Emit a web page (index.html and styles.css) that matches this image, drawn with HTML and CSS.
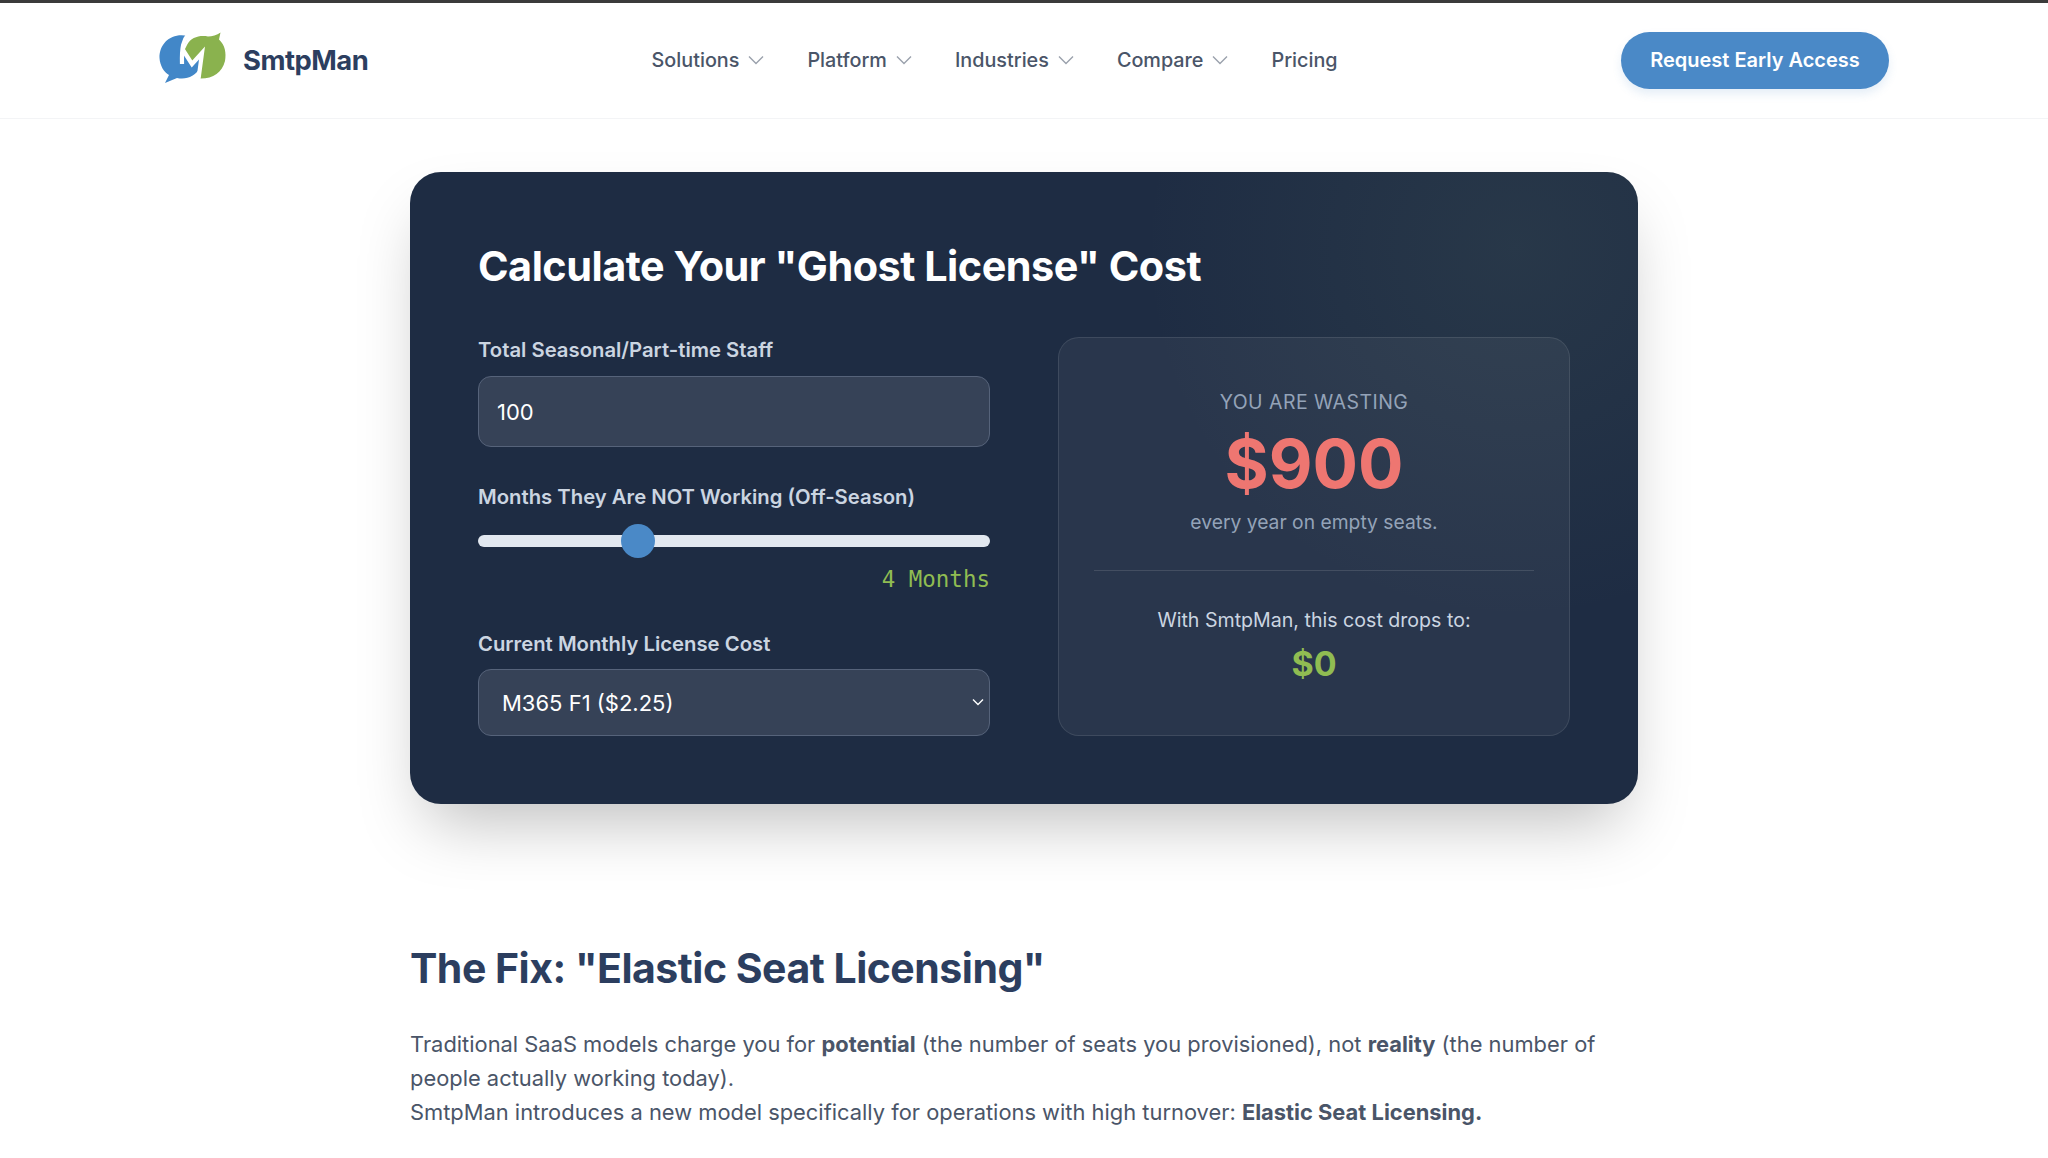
FILE: index.html
```html
<!DOCTYPE html>
<html lang="en">
<head>
<meta charset="utf-8">
<title>SmtpMan</title>
<link rel="stylesheet" href="styles.css">
</head>
<body>
<header class="site-header">
  <a class="brand" href="#">
    <svg class="brand-mark" viewBox="8 7 72 60" aria-hidden="true">
      <path class="mark-green" d="M37 22C41 14 50 12 58 13.5C62 13.5 67 12 70.5 9.5L69 16.5C75 22 76.5 30 75 38C72 50 62 56.5 48 55.5L52 30L42 41L34 28Z"/>
      <path class="mark-blue" d="M38 13C22 9 9 20 9.5 35C10 43 14 49 19 52L15 60L27 55C37 57 45 53 50 45L52 30L42 41L33 27Z"/>
      <path class="mark-gap" d="M38 12C33.5 17 31.5 24 32 41"/>
      <path class="mark-gap" d="M33 27L42 41L52 30L48.5 56"/>
    </svg>
    <span class="brand-name">SmtpMan</span>
  </a>
  <nav class="main-nav">
    <a href="#">Solutions<svg class="chev" viewBox="0 0 16 10"><path d="M1 1.5l7 7 7-7"/></svg></a>
    <a href="#">Platform<svg class="chev" viewBox="0 0 16 10"><path d="M1 1.5l7 7 7-7"/></svg></a>
    <a href="#">Industries<svg class="chev" viewBox="0 0 16 10"><path d="M1 1.5l7 7 7-7"/></svg></a>
    <a href="#">Compare<svg class="chev" viewBox="0 0 16 10"><path d="M1 1.5l7 7 7-7"/></svg></a>
    <a href="#">Pricing</a>
  </nav>
  <a class="cta" href="#">Request Early Access</a>
</header>
<main class="content">
  <section class="calc">
    <h2 class="calc-title">Calculate Your "Ghost License" Cost</h2>
    <div class="calc-grid">
      <form class="calc-form">
        <div class="field">
          <label class="field-label" for="staff">Total Seasonal/Part-time Staff</label>
          <input class="text-input" id="staff" type="text" value="100">
        </div>
        <div class="field field-range">
          <label class="field-label" for="months">Months They Are NOT Working (Off-Season)</label>
          <input class="range" id="months" type="range" min="1" max="11" value="4">
          <div class="range-value">4 Months</div>
        </div>
        <div class="field field-select">
          <label class="field-label" for="cost">Current Monthly License Cost</label>
          <div class="select-wrap">
            <select class="select" id="cost"><option>M365 F1 ($2.25)</option></select>
            <svg class="select-chev" viewBox="0 0 12 8"><path d="M1 1.5l5 5 5-5"/></svg>
          </div>
        </div>
      </form>
      <aside class="result">
        <div class="result-eyebrow">YOU ARE WASTING</div>
        <div class="result-amount">$900</div>
        <div class="result-note">every year on empty seats.</div>
        <div class="result-foot">
          <div class="result-with">With SmtpMan, this cost drops to:</div>
          <div class="result-zero">$0</div>
        </div>
      </aside>
    </div>
  </section>
  <section class="fix">
    <h2 class="fix-title">The Fix: "Elastic Seat Licensing"</h2>
    <p class="fix-text">Traditional SaaS models charge you for <strong>potential</strong> (the number of seats you provisioned), not <strong>reality</strong> (the number of people actually working today).<br>SmtpMan introduces a new model specifically for operations with high turnover: <strong>Elastic Seat Licensing.</strong></p>
  </section>
</main>
</body>
</html>
```
FILE: styles.css
```css
* { box-sizing: border-box; }
html, body { margin: 0; height: 100%; overflow: hidden; }
body {
  font-family: Inter, "Liberation Sans", sans-serif;
  background: #fff;
  color: #4a5568;
}
a { text-decoration: none; color: inherit; }

.site-header {
  height: 119px;
  border-top: 3px solid #3b3b3b;
  border-bottom: 1px solid #f3f4f6;
  padding: 0 159px 1px;
  display: flex;
  align-items: center;
  justify-content: space-between;
}
.brand { display: flex; align-items: center; gap: 13px; }
.brand-mark { display: block; width: 72px; height: 60px; margin-left: -1px; }
.mark-blue { fill: #4287c8; }
.mark-green { fill: #8ab24e; }
.mark-gap { fill: none; stroke: #fff; stroke-width: 4.2; }
.brand-name { font-size: 27.4px; font-weight: 700; letter-spacing: -0.5px; color: #2c3e5f; }

.main-nav { display: flex; align-items: center; gap: 43px; font-size: 19.8px; font-weight: 500; color: #4a5568; }
.main-nav a { display: flex; align-items: center; gap: 9px; }
.chev { width: 16px; height: 10px; fill: none; stroke: #9aa1ac; stroke-width: 1.4; }

.cta {
  height: 57px;
  width: 268px;
  border-radius: 29px;
  background: #4a89c7;
  color: #fff;
  font-size: 20px;
  font-weight: 600;
  display: flex;
  align-items: center;
  justify-content: center;
  box-shadow: 0 5px 10px rgba(74, 137, 199, .14);
}

.content { width: 1228px; margin: 53px auto 0; }

.calc {
  height: 632px;
  padding: 68px;
  border-radius: 31px;
  background: radial-gradient(circle at 90% 12%, rgba(120, 150, 120, .11), rgba(30, 44, 66, 0) 30%), #1e2c43;
  box-shadow: 0 33px 66px -16px rgba(0, 0, 0, .26);
}
.calc-title { margin: 0 0 45px; font-size: 41.4px; line-height: 52px; font-weight: 700; letter-spacing: -0.5px; color: #fff; }
.calc-grid { display: grid; grid-template-columns: 512px 512px; gap: 68px; }

.field-label { display: block; font-size: 20.3px; line-height: 26px; font-weight: 600; color: #cbd5e1; }
.field-range { margin-top: 37px; }
.field-select { margin-top: 37px; }
.text-input {
  display: block;
  width: 100%;
  height: 71px;
  margin-top: 13px;
  padding: 0 18px;
  border: 1px solid #56637a;
  border-radius: 13px;
  background: #364257;
  color: #fff;
  font: 400 22px Inter, sans-serif;
}
.range {
  display: block;
  width: 100%;
  height: 34px;
  margin: 14px 0 0;
  appearance: none;
  -webkit-appearance: none;
  background: transparent;
}
.range::-webkit-slider-runnable-track { height: 12px; border-radius: 6px; background: #e2e8f0; }
.range::-webkit-slider-thumb {
  -webkit-appearance: none;
  width: 34px;
  height: 34px;
  margin-top: -11px;
  border-radius: 50%;
  background: #4a89c7;
}
.range-value {
  margin-top: 6px;
  text-align: right;
  font-family: "DejaVu Sans Mono", monospace;
  font-size: 22.5px;
  line-height: 30px;
  color: #90bc52;
}
.select-wrap { position: relative; margin-top: 12px; }
.select {
  display: block;
  width: 100%;
  height: 67px;
  padding: 0 23px;
  border: 1px solid #56637a;
  border-radius: 13px;
  background: #364257;
  color: #fff;
  font: 400 22px Inter, sans-serif;
  appearance: none;
  -webkit-appearance: none;
}
.select-chev {
  position: absolute;
  right: 6px;
  top: 29px;
  width: 12px;
  height: 8px;
  fill: none;
  stroke: #fff;
  stroke-width: 1.4;
}

.result {
  height: 399px;
  padding: 51px 35px 0;
  border: 1px solid rgba(255, 255, 255, .1);
  border-radius: 21px;
  background: rgba(255, 255, 255, .05);
  text-align: center;
}
.result-eyebrow { font-size: 19.5px; line-height: 26px; letter-spacing: .45px; color: #94a3b8; }
.result-amount { margin-top: 7px; font-size: 67.5px; line-height: 84px; font-weight: 700; color: #ee7671; }
.result-note { margin-top: 3px; font-size: 19.3px; line-height: 26px; color: #94a3b8; }
.result-foot { margin-top: 35px; padding-top: 36px; border-top: 1px solid rgba(255, 255, 255, .12); }
.result-with { font-size: 19.6px; line-height: 26px; color: #cbd5e1; }
.result-zero { margin-top: 10px; font-size: 34px; line-height: 42px; font-weight: 700; color: #90bc52; }

.fix { margin-top: 138px; }
.fix-title { margin: 0 0 33px; font-size: 41px; line-height: 52px; font-weight: 700; letter-spacing: -0.5px; color: #2c3e5f; }
.fix-text { margin: 0; font-size: 21.88px; line-height: 34px; color: #4a5568; }
.fix-text strong { font-weight: 700; }
```
